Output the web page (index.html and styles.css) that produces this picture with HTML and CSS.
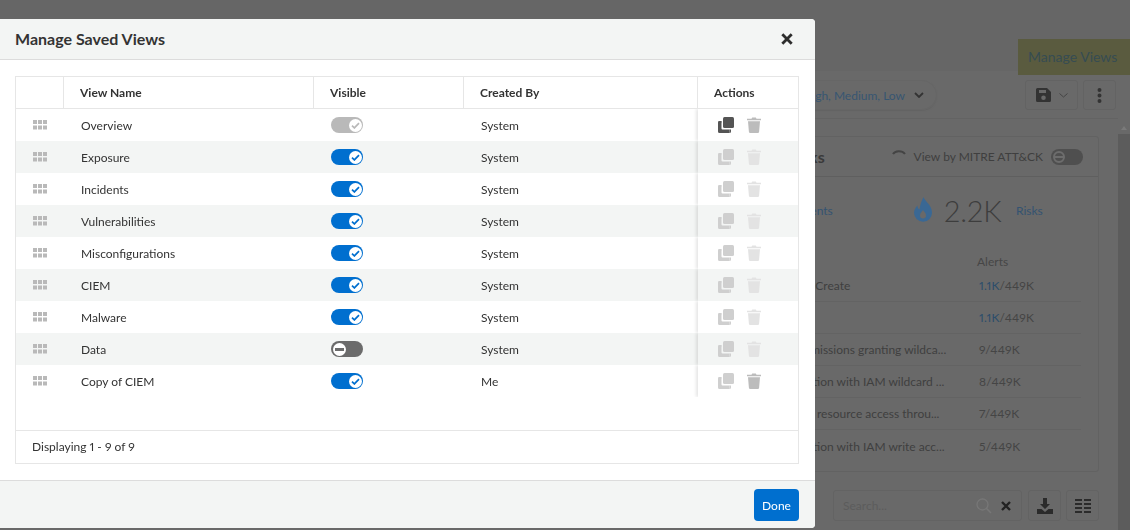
FILE: index.html
```html
<!DOCTYPE html>
<html lang="en">
<head>
<meta charset="utf-8">
<title>Manage Saved Views</title>
<link rel="stylesheet" href="styles.css">
</head>
<body>
<svg class="defs" width="0" height="0" aria-hidden="true">
  <symbol id="i-drag" viewBox="0 0 14 10"><path d="M0 0h4v4H0zM5 0h4v4H5zM10 0h4v4h-4zM0 5.500h4v4H0zM5 5.500h4v4H5zM10 5.500h4v4h-4z"/></symbol>
  <symbol id="i-copy" viewBox="0 0 16 16"><path d="M6.500 0h8A1.500 1.500 0 0 1 16 1.500v8a1.500 1.500 0 0 1-1.500 1.500h-8A1.500 1.500 0 0 1 5 9.500v-8A1.500 1.500 0 0 1 6.500 0z"/><path d="M3.500 4.500v7a1 1 0 0 0 1 1h7V16h-10A1.500 1.500 0 0 1 0 14.500v-9A1.500 1.500 0 0 1 1.500 4z"/><path d="M0 5.500A1.500 1.500 0 0 1 1.500 4h2v1.500zM11.500 12.500H13v2a1.500 1.500 0 0 1-1.500 1.500z"/></symbol>
  <symbol id="i-trash" viewBox="0 0 14 16"><path d="M0 1.800h4.500L5.200.4h3.600l.7 1.400H14v1.500H0zM1 4.200h12l-.9 10.600a1.300 1.300 0 0 1-1.300 1.200H3.200a1.300 1.300 0 0 1-1.300-1.200z"/></symbol>
  <symbol id="i-check" viewBox="0 0 10 8"><path d="M1 4.200 3.700 6.800 9 1.300" fill="none" stroke="currentColor" stroke-width="1.900"/></symbol>
</svg>

<div class="page">
  <div class="top"><div class="tab">Manage Views</div></div>
  <div class="content">
    <div class="main">
      <div class="toolbar">
        <div class="pill"><span>High, Medium, Low</span>
          <svg class="chev" width="10" height="6" viewBox="0 0 10 6"><path d="M1 1l4 4 4-4" fill="none" stroke="#333" stroke-width="1.800"/></svg>
        </div>
        <div class="tools">
          <div class="tbtn save">
            <svg width="15" height="14" viewBox="0 0 15 14"><path fill="#333" d="M1.500 0H11l4 4v8.500a1.500 1.500 0 0 1-1.500 1.500h-12A1.500 1.500 0 0 1 0 12.500v-11A1.500 1.500 0 0 1 1.500 0zM3 2v3h7V2zm4.500 5.500a2.300 2.300 0 1 0 0 4.600 2.300 2.300 0 0 0 0-4.600z"/></svg>
            <svg width="9" height="5" viewBox="0 0 9 5"><path d="M.5.500l4 3.500 4-3.500" fill="none" stroke="#444" stroke-width="1"/></svg>
          </div>
          <div class="tbtn more">
            <svg width="5" height="15" viewBox="0 0 5 15"><path fill="#333" d="M2.500 0a2 2 0 1 1 0 4 2 2 0 0 1 0-4zM2.500 5.500a2 2 0 1 1 0 4 2 2 0 0 1 0-4zM2.500 11a2 2 0 1 1 0 4 2 2 0 0 1 0-4z"/></svg>
          </div>
        </div>
      </div>
      <section class="card">
        <div class="card-head">
          <span class="card-title">Top Risks</span>
          <svg class="spin" width="14" height="6" viewBox="0 0 14 6"><path d="M1 5C3 1.500 10 1 13 5" fill="none" stroke="#444" stroke-width="2"/></svg>
          <span class="mitre">View by MITRE ATT&amp;CK</span>
          <span class="mini-toggle"><span class="mini-knob"></span></span>
        </div>
        <div class="stats">
          <span class="link events">Incidents</span>
          <svg class="flame" width="18" height="25" viewBox="0 0 18 25"><path fill="#3a6894" d="M9.500 0c1 4 8.500 8 8.500 15.500A9 9 0 0 1 0 16c0-3 1.500-5.500 3.500-7.500 0 2 .5 3 2 4C6 8 7.500 4 9.500 0zM9 13c-1 2-3 3-3 5.500a3 3 0 0 0 6 0C12 16 10 15 9 13z"/></svg>
          <span class="big">2.2K</span>
          <span class="link">Risks</span>
        </div>
        <div class="alerts-head">Alerts</div>
        <div class="rrow"><span class="rname">IAM Key Create</span><span class="rval"><b>1.1K</b>/449K</span></div>
        <div class="rrow"><span class="rname">Root</span><span class="rval"><b>1.1K</b>/449K</span></div>
        <div class="rrow"><span class="rname">IAM permissions granting wildca...</span><span class="rval">9/449K</span></div>
        <div class="rrow"><span class="rname">Modification with IAM wildcard ...</span><span class="rval">8/449K</span></div>
        <div class="rrow"><span class="rname">All direct resource access throu...</span><span class="rval">7/449K</span></div>
        <div class="rrow last"><span class="rname">Modification with IAM write acc...</span><span class="rval">5/449K</span></div>
      </section>
      <div class="bottom">
        <div class="search"><span class="ph">Search...</span>
          <svg class="mag" width="16" height="16" viewBox="0 0 16 16"><circle cx="6.500" cy="6.500" r="5.500" fill="none" stroke="#777" stroke-width="1.300"/><path d="M10.500 10.500 15 15" stroke="#777" stroke-width="1.600"/></svg>
          <svg class="clr" width="10" height="10" viewBox="0 0 10 10"><path d="M1 1l8 8M9 1l-8 8" stroke="#222" stroke-width="2.400"/></svg>
        </div>
        <div class="tbtn sq">
          <svg width="16" height="16" viewBox="0 0 16 16"><path fill="#2b2b2b" d="M6 0h4v6h3l-5 5-5-5h3zM0 11h4.500L8 14l3.500-3H16v5H0z"/></svg>
        </div>
        <div class="tbtn sq">
          <svg width="16" height="14" viewBox="0 0 16 14"><path fill="#2b2b2b" d="M0 0h7v2H0zM9 0h7v2H9zM0 4h7v2H0zM9 4h7v2H9zM0 8h7v2H0zM9 8h7v2H9zM0 12h7v2H0zM9 12h7v2H9z"/></svg>
        </div>
      </div>
    </div>
    <div class="scroll"><span class="arrow"></span><span class="track"></span></div>
  </div>
</div>

<div class="modal" role="dialog" aria-label="Manage Saved Views">
  <header class="m-head">
    <h1>Manage Saved Views</h1>
    <svg class="close" width="12" height="12" viewBox="0 0 12 12"><path d="M1.300 1.300l9.400 9.400M10.700 1.300l-9.400 9.400" stroke="#2d2d2d" stroke-width="2.800"/></svg>
  </header>
  <div class="m-body">
    <div class="tbl">
      <div class="row head">
        <div class="c c-drag"></div>
        <div class="c c-name">View Name</div>
        <div class="c c-vis">Visible</div>
        <div class="c c-by">Created By</div>
        <div class="c c-act">Actions</div>
      </div>
      <div class="rows">
        <div class="row">
          <div class="c c-drag"><svg class="drag"><use href="#i-drag"/></svg></div>
          <div class="c c-name">Overview</div>
          <div class="c c-vis"><span class="tg locked"><span class="knob"><svg class="ck"><use href="#i-check"/></svg></span></span></div>
          <div class="c c-by">System</div>
          <div class="c c-act"><svg class="copy on"><use href="#i-copy"/></svg><svg class="trash on"><use href="#i-trash"/></svg></div>
        </div>
        <div class="row">
          <div class="c c-drag"><svg class="drag"><use href="#i-drag"/></svg></div>
          <div class="c c-name">Exposure</div>
          <div class="c c-vis"><span class="tg"><span class="knob"><svg class="ck"><use href="#i-check"/></svg></span></span></div>
          <div class="c c-by">System</div>
          <div class="c c-act"><svg class="copy"><use href="#i-copy"/></svg><svg class="trash"><use href="#i-trash"/></svg></div>
        </div>
        <div class="row">
          <div class="c c-drag"><svg class="drag"><use href="#i-drag"/></svg></div>
          <div class="c c-name">Incidents</div>
          <div class="c c-vis"><span class="tg"><span class="knob"><svg class="ck"><use href="#i-check"/></svg></span></span></div>
          <div class="c c-by">System</div>
          <div class="c c-act"><svg class="copy"><use href="#i-copy"/></svg><svg class="trash"><use href="#i-trash"/></svg></div>
        </div>
        <div class="row">
          <div class="c c-drag"><svg class="drag"><use href="#i-drag"/></svg></div>
          <div class="c c-name">Vulnerabilities</div>
          <div class="c c-vis"><span class="tg"><span class="knob"><svg class="ck"><use href="#i-check"/></svg></span></span></div>
          <div class="c c-by">System</div>
          <div class="c c-act"><svg class="copy"><use href="#i-copy"/></svg><svg class="trash"><use href="#i-trash"/></svg></div>
        </div>
        <div class="row">
          <div class="c c-drag"><svg class="drag"><use href="#i-drag"/></svg></div>
          <div class="c c-name">Misconfigurations</div>
          <div class="c c-vis"><span class="tg"><span class="knob"><svg class="ck"><use href="#i-check"/></svg></span></span></div>
          <div class="c c-by">System</div>
          <div class="c c-act"><svg class="copy"><use href="#i-copy"/></svg><svg class="trash"><use href="#i-trash"/></svg></div>
        </div>
        <div class="row">
          <div class="c c-drag"><svg class="drag"><use href="#i-drag"/></svg></div>
          <div class="c c-name">CIEM</div>
          <div class="c c-vis"><span class="tg"><span class="knob"><svg class="ck"><use href="#i-check"/></svg></span></span></div>
          <div class="c c-by">System</div>
          <div class="c c-act"><svg class="copy"><use href="#i-copy"/></svg><svg class="trash"><use href="#i-trash"/></svg></div>
        </div>
        <div class="row">
          <div class="c c-drag"><svg class="drag"><use href="#i-drag"/></svg></div>
          <div class="c c-name">Malware</div>
          <div class="c c-vis"><span class="tg"><span class="knob"><svg class="ck"><use href="#i-check"/></svg></span></span></div>
          <div class="c c-by">System</div>
          <div class="c c-act"><svg class="copy"><use href="#i-copy"/></svg><svg class="trash"><use href="#i-trash"/></svg></div>
        </div>
        <div class="row">
          <div class="c c-drag"><svg class="drag"><use href="#i-drag"/></svg></div>
          <div class="c c-name">Data</div>
          <div class="c c-vis"><span class="tg off"><span class="knob"><span class="minus"></span></span></span></div>
          <div class="c c-by">System</div>
          <div class="c c-act"><svg class="copy"><use href="#i-copy"/></svg><svg class="trash"><use href="#i-trash"/></svg></div>
        </div>
        <div class="row">
          <div class="c c-drag"><svg class="drag"><use href="#i-drag"/></svg></div>
          <div class="c c-name">Copy of CIEM</div>
          <div class="c c-vis"><span class="tg"><span class="knob"><svg class="ck"><use href="#i-check"/></svg></span></span></div>
          <div class="c c-by">Me</div>
          <div class="c c-act"><svg class="copy"><use href="#i-copy"/></svg><svg class="trash on"><use href="#i-trash"/></svg></div>
        </div>
      </div>
      <div class="pager">Displaying 1 - 9 of 9</div>
    </div>
  </div>
  <footer class="m-foot"><button class="done" type="button">Done</button></footer>
</div>
</body>
</html>
```

FILE: styles.css
```css
* { box-sizing: border-box; }
html, body { margin: 0; height: 100%; overflow: hidden; }
body { font-family: Lato, "Open Sans", sans-serif; font-size: 12px; color: #333; background: #696969; font-variant-numeric: proportional-nums; }
.defs { position: absolute; }

/* dimmed page behind the dialog */
.page { height: 530px; display: flex; flex-direction: column; }
.top { height: 71px; flex: none; background: #666; padding-top: 39px; display: flex; justify-content: flex-end; }
.tab { width: 112px; height: 36px; background: #5a5b3f; color: #364c52; font-size: 14px; line-height: 36px; padding-left: 10px; position: relative; }
.content { flex: 1; display: flex; min-height: 0; }
.main { flex: 1; min-width: 0; padding-top: 9px; }
.scroll { width: 12px; flex: none; display: flex; flex-direction: column; padding-top: 55px; align-items: center; }
.arrow { border: 3px solid transparent; border-bottom: 4px solid #7a7a7a; border-top: 0; margin-bottom: 4px; }
.track { align-self: stretch; flex: 1; background: #5c5c5c; }

.toolbar { height: 39px; padding: 0 2px 9px 0; border-bottom: 1px solid #636363; display: flex; justify-content: flex-end; }
.pill { height: 30px; width: 300px; margin-right: 88px; border: 1px solid #666; border-radius: 15px; color: #375672; font-size: 12px; display: flex; align-items: center; justify-content: flex-end; padding-right: 12px; box-shadow: 0 1px 1px #636363; white-space: nowrap; }
.chev { margin-left: 9px; }
.tools { display: flex; gap: 5px; }
.tbtn { height: 30px; border: 1px solid #636363; border-radius: 3px; display: flex; align-items: center; justify-content: center; }
.save { width: 53px; gap: 8px; }
.more { width: 33px; }
.sq { width: 33px; height: 31px; }

.card { width: 500px; height: 336px; margin: 17px 19px 0 auto; border: 1px solid #626262; border-radius: 3px; }
.card-head { height: 40px; border-bottom: 1px solid #5f5f5f; display: flex; align-items: center; justify-content: flex-end; padding-right: 15px; white-space: nowrap; }
.card-title { margin-right: auto; margin-left: 158px; font-size: 16px; font-weight: 700; color: #3a3a3a; }
.spin { flex: none; margin-right: 8px; margin-bottom: 9px; }
.mitre { color: #3f3f3f; font-size: 12px; margin-right: 8px; }
.mini-toggle { flex: none; width: 32px; height: 16px; border-radius: 8px; background: #4f4f4f; padding: 2px; display: flex; }
.mini-knob { width: 12px; height: 12px; border-radius: 50%; border: 2px solid #6d6d6d; background: linear-gradient(#4f4f4f 40%, #6d6d6d 40%, #6d6d6d 60%, #4f4f4f 60%); }
.stats { height: 67px; display: flex; align-items: center; padding-left: 185px; white-space: nowrap; }
.link { color: #345371; }
.events { width: 45px; flex: none; margin-right: 84px; text-align: right; }
.flame { flex: none; margin-top: -3px; }
.big { flex: none; font-size: 29px; font-weight: 300; color: #3d3d3d; margin: 0 16px 0 12px; width: 56px; }
.alerts-head { margin: 8px 0 0 377px; height: 18px; line-height: 20px; color: #464646; }
.rrow { height: 32px; margin-right: 17px; border-bottom: 1px solid #636363; display: flex; align-items: center; color: #3f3f3f; padding-left: 167px; }
.rrow.last { border-bottom: 0; }
.rname { width: 180px; flex: none; margin-right: 32px; white-space: nowrap; }
.rval { color: #454545; letter-spacing: .2px; }
.rval b { font-weight: 400; color: #2c4d6b; }
.bottom { display: flex; justify-content: flex-end; gap: 5px; margin: 18px 19px 0 0; }
.search { width: 189px; height: 31px; margin-right: 1px; border: 1px solid #636363; border-radius: 3px; display: flex; align-items: center; padding: 0 10px 0 9px; }
.ph { color: #5c5c5c; font-size: 12px; margin-right: auto; }
.mag { margin-right: 9px; }

/* dialog */
.modal { position: fixed; top: 19px; left: 0; width: 815px; height: 509px; background: #fff; border-radius: 0 4px 4px 0; display: flex; flex-direction: column; }
.m-head { height: 41px; flex: none; background: #f3f5f4; border-bottom: 1px solid #dcdcdc; border-radius: 0 4px 0 0; display: flex; align-items: center; justify-content: space-between; padding: 0 22px 1px 15px; }
h1 { margin: 0; font-size: 16px; font-weight: 700; color: #333; }
.m-body { flex: 1; padding: 16px 16px 16px 15px; min-height: 0; }
.tbl { height: 388px; border: 1px solid #e6e6e6; display: flex; flex-direction: column; }
.row { display: grid; grid-template-columns: 48px 250px 150px 234px 100px; height: 32px; align-items: stretch; }
.rows { flex: 1; }
.rows .row:nth-child(even) { background: #f3f5f4; }
.row.head { height: 32px; flex: none; border-bottom: 1px solid #e6e6e6; font-weight: 700; }
.c { display: flex; align-items: center; padding-left: 17px; min-width: 0; }
.head .c { padding-left: 16px; border-right: 1px solid #e6e6e6; }
.head .c:last-child { border-right: 0; }
.head .c { font-size: 12px; }
.c-drag { padding-left: 18px; }
.c-vis { padding-left: 17px; }
.rows .c-act { background-color: #fff; box-shadow: -2px 0 3px rgba(0, 0, 0, .1); clip-path: inset(0 0 0 -6px); padding: 0 0 0 20px; gap: 13px; }
.rows .row:nth-child(even) .c-act { background-color: #f3f5f4; }
.drag { width: 14px; height: 10px; fill: #b9b9b9; margin-left: -1px; }
.copy { width: 16px; height: 16px; fill: #cfcfcf; }
.copy.on { fill: #545454; }
.trash { width: 14px; height: 16px; fill: #e3e3e3; }
.trash.on { fill: #bcbcbc; }

.tg { width: 32px; height: 16px; border-radius: 8px; background: #006fcf; display: flex; justify-content: flex-end; align-items: center; padding: 0 1.500px; color: #006fcf; }
.tg.locked { background: #b9b9b9; color: #b9b9b9; }
.tg.off { background: #6b6b6b; color: #6b6b6b; justify-content: flex-start; }
.knob { width: 13px; height: 13px; border-radius: 50%; background: #fff; display: flex; align-items: center; justify-content: center; }
.ck { width: 9px; height: 7px; }
.minus { width: 9px; height: 3px; background: #6b6b6b; }

.pager { height: 33px; flex: none; border-top: 1px solid #e6e6e6; display: flex; align-items: center; padding: 0 0 2px 16px; }
.m-foot { height: 48px; flex: none; background: #f3f5f4; border-top: 1px solid #dcdcdc; border-radius: 0 0 4px 0; display: flex; justify-content: flex-end; align-items: flex-start; padding: 8px 16px 0 0; }
.done { width: 45px; height: 32px; padding: 0; border: 0; border-radius: 4px; background: #006fcf; color: #fff; font: 12px Lato, sans-serif; }
```
